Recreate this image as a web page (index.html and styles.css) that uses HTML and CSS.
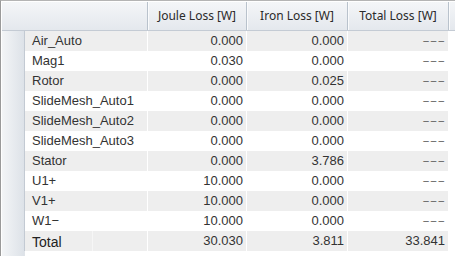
FILE: index.html
```html
<!DOCTYPE html>
<html>
<head>
<meta charset="utf-8">
<link rel="stylesheet" href="styles.css">
</head>
<body>
<div class="frame">
  <div class="hrow">
    <div class="hc hfirst"></div>
    <div class="hc hj">Joule Loss [W]</div>
    <div class="hc hi">Iron Loss [W]</div>
    <div class="hc ht">Total Loss [W]</div>
    <div class="hc hstub"></div>
  </div>
  <div class="row odd"><div class="rh"></div><div class="name">Air_Auto</div><div class="num nj">0.000</div><div class="num ni">0.000</div><div class="num nt dash">–––</div></div>
  <div class="row"><div class="rh"></div><div class="name">Mag1</div><div class="num nj">0.030</div><div class="num ni">0.000</div><div class="num nt dash">–––</div></div>
  <div class="row odd"><div class="rh"></div><div class="name">Rotor</div><div class="num nj">0.000</div><div class="num ni">0.025</div><div class="num nt dash">–––</div></div>
  <div class="row"><div class="rh"></div><div class="name">SlideMesh_Auto1</div><div class="num nj">0.000</div><div class="num ni">0.000</div><div class="num nt dash">–––</div></div>
  <div class="row odd"><div class="rh"></div><div class="name">SlideMesh_Auto2</div><div class="num nj">0.000</div><div class="num ni">0.000</div><div class="num nt dash">–––</div></div>
  <div class="row"><div class="rh"></div><div class="name">SlideMesh_Auto3</div><div class="num nj">0.000</div><div class="num ni">0.000</div><div class="num nt dash">–––</div></div>
  <div class="row odd"><div class="rh"></div><div class="name">Stator</div><div class="num nj">0.000</div><div class="num ni">3.786</div><div class="num nt dash">–––</div></div>
  <div class="row"><div class="rh"></div><div class="name">U1+</div><div class="num nj">10.000</div><div class="num ni">0.000</div><div class="num nt dash">–––</div></div>
  <div class="row odd"><div class="rh"></div><div class="name">V1+</div><div class="num nj">10.000</div><div class="num ni">0.000</div><div class="num nt dash">–––</div></div>
  <div class="row"><div class="rh"></div><div class="name">W1−</div><div class="num nj">10.000</div><div class="num ni">0.000</div><div class="num nt dash">–––</div></div>
  <div class="row odd total"><div class="rh"></div><div class="name tname"><span class="tlabel">Total</span></div><div class="num nj">30.030</div><div class="num ni">3.811</div><div class="num nt">33.841</div></div>
  <div class="filler"><div class="rh"></div></div>
</div>
</body>
</html>
```

FILE: styles.css
```css
html, body {
  margin: 0;
  padding: 0;
  background: #ffffff;
}
body {
  width: 455px;
  height: 256px;
  overflow: hidden;
  font-family: "Liberation Sans", Arial, sans-serif;
  font-size: 13px;
  color: #333333;
}
.frame {
  box-sizing: border-box;
  width: 455px;
  height: 256px;
  border-left: 1px solid #9a9a9a;
  border-top: 1px solid #b4b4b4;
  padding: 1px 0 0 1px;
  display: flex;
  flex-direction: column;
}
.hrow {
  display: flex;
  height: 29px;
  flex: none;
  box-sizing: border-box;
  border-bottom: 1px solid #c4cbd4;
  background: linear-gradient(#f4f6f8, #e4e8ed);
}
.hc {
  box-sizing: border-box;
  height: 100%;
  border-right: 1px solid #b9c2cc;
  box-shadow: inset 1px 0 0 #fafbfc;
  display: flex;
  align-items: center;
  justify-content: center;
  font-family: "Noto Sans", "Open Sans", sans-serif;
  font-size: 12px;
  color: #2a2a2a;
  padding-bottom: 1px;
}
.hfirst { width: 146px; box-shadow: none; }
.hj { width: 99px; }
.hi { width: 101px; }
.ht { width: 101px; }
.hstub { flex: 1; border-right: none; }
.row {
  display: flex;
  height: 20px;
  flex: none;
}
.rh {
  box-sizing: border-box;
  width: 23px;
  height: 100%;
  border-right: 1px solid #c3cad3;
  background: linear-gradient(90deg, #f3f5f7, #dde2e8);
  flex: none;
}
.name {
  width: 122px;
  box-sizing: border-box;
  padding-left: 7px;
  line-height: 20px;
  white-space: nowrap;
}
.num {
  box-sizing: border-box;
  margin-left: 1px;
  padding-right: 3px;
  text-align: right;
  line-height: 20px;
}
.dash {
  font-size: 10px;
  letter-spacing: 2px;
  padding-right: 2px;
  color: #555555;
}
.nj { width: 98px; }
.ni { width: 100px; }
.nt { width: 100px; }
.odd .name, .odd .num {
  background: #eeeeee;
}
.tname {
  position: relative;
}
.tname::after {
  content: "";
  position: absolute;
  left: 67px;
  top: 0;
  bottom: 0;
  width: 1px;
  background: #f6f6f6;
}
.tlabel {
  font-size: 14px;
  color: #222222;
  position: relative;
  top: 1px;
}
.filler {
  flex: 1;
  display: flex;
}
.filler .rh {
  height: auto;
  border-right-color: #dfe3e8;
}
```
